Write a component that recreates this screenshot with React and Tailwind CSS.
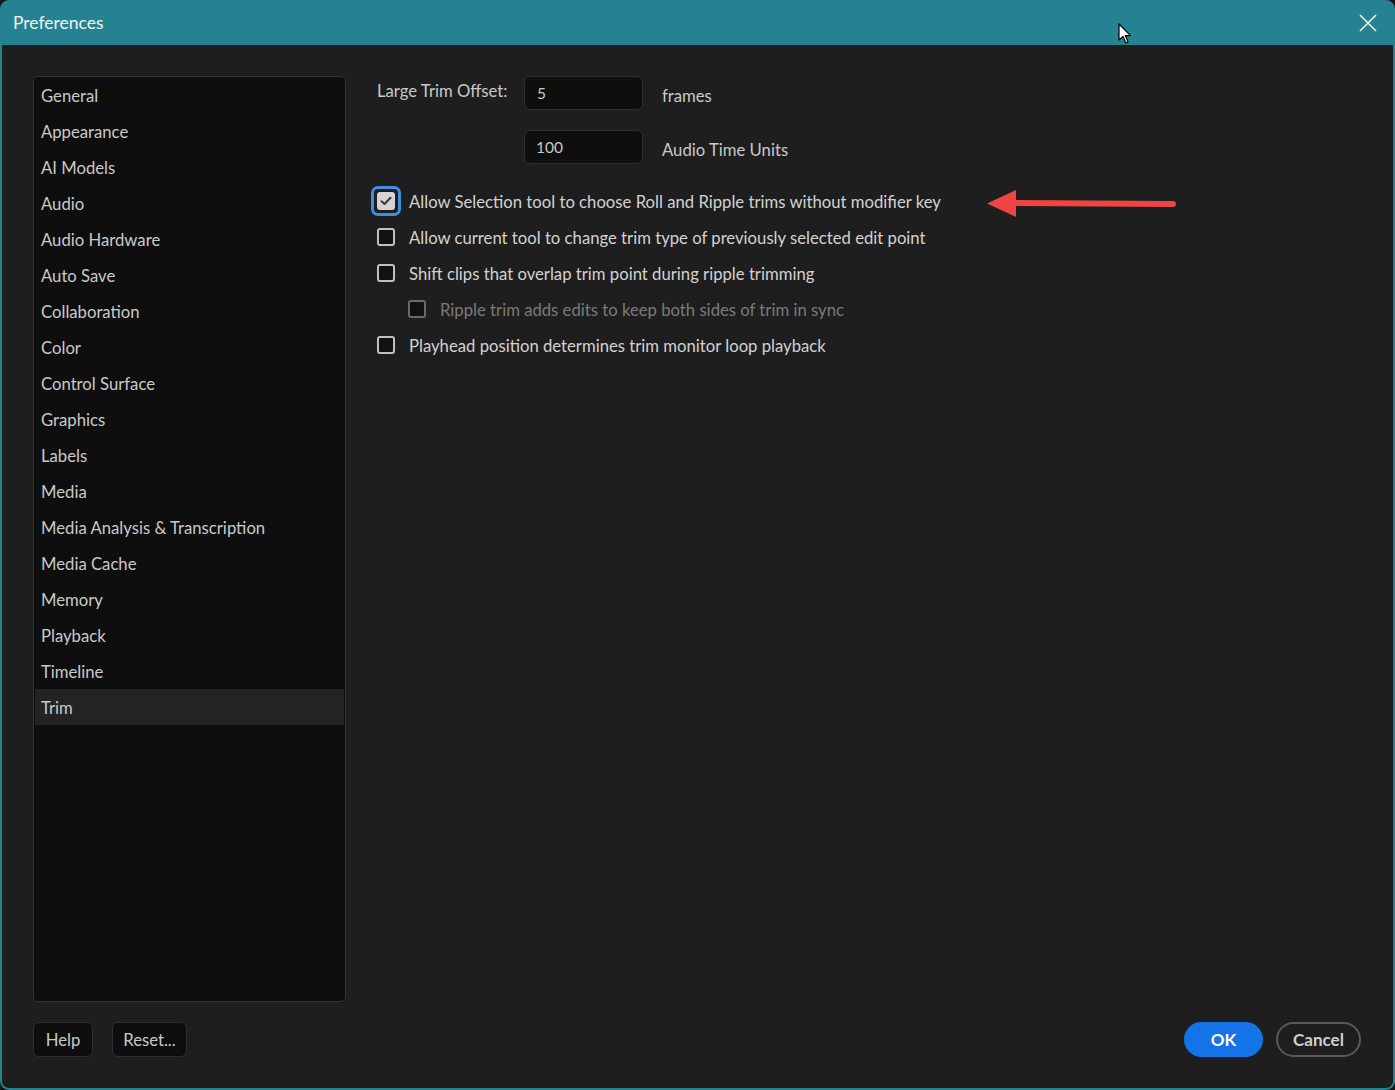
import React from "react";

const items = [
  "General","Appearance","AI Models","Audio","Audio Hardware","Auto Save","Collaboration","Color","Control Surface","Graphics","Labels","Media","Media Analysis & Transcription","Media Cache","Memory","Playback","Timeline","Trim",
];

function Box({ checked, dim }) {
  if (checked) {
    return (
      <div className="w-[30px] h-[30px] -ml-[6px] mr-[-6px] rounded-[7px] border-[3px] border-[#3d8fe6] flex items-center justify-center shrink-0">
        <div className="w-[18px] h-[18px] rounded-[3px] bg-[#d4d4d4] flex items-center justify-center">
          <svg width="12" height="10" viewBox="0 0 12 10"><path d="M1.5 5.2 L4.5 8 L10.5 1.8" stroke="#3a3a3a" strokeWidth="2" fill="none" strokeLinecap="round" strokeLinejoin="round"/></svg>
        </div>
      </div>
    );
  }
  return (
    <div className={"w-[18px] h-[18px] rounded-[3px] border-2 bg-[#111111] shrink-0 " + (dim ? "border-[#6a6a6a]" : "border-[#c0c0c0]")} />
  );
}

function Row({ checked, dim, indent, children }) {
  return (
    <div className={"h-[36px] flex items-center " + (indent ? "pl-[31px]" : "")}>
      <Box checked={checked} dim={dim} />
      <span className={"ml-[14px] pt-[3px] text-[16.7px] " + (dim ? "text-[#7a7a7a]" : "text-[#d2d2d2]")}>{children}</span>
    </div>
  );
}

export default function App() {
  return (
    <div className="w-[1395px] h-[1090px] bg-[#161616] relative" style={{ fontFamily: "Lato, 'Noto Sans', sans-serif" }}>
      <div className="w-full h-full rounded-[9px] overflow-hidden bg-[#258391] flex flex-col">
        <div className="h-[45px] shrink-0 flex items-center justify-between pl-[13px] pr-[18px]">
          <span className="text-[17.5px] pt-[2px] text-[#f2f2f2]">Preferences</span>
          <svg width="18" height="18" viewBox="0 0 18 18"><path d="M1 1 L17 17 M17 1 L1 17" stroke="#f2f2f2" strokeWidth="1.6"/></svg>
        </div>
        <div className="flex-1 mx-[2px] mb-[2px] bg-[#1e1e1e] rounded-b-[7px] flex flex-col pt-[31px] pl-[31px] pr-[32px]">
          <div className="flex h-[926px]">
            <div className="w-[313px] h-full bg-[#0e0e0e] border border-[#323232] rounded-[5px] px-[1px] shrink-0">
              {items.map((t) => (
                <div key={t} className={"h-[36px] flex items-center pl-[6px] pt-[4px] text-[16.7px] text-[#c9c9c9] " + (t === "Trim" ? "bg-[#232323]" : "")}>{t}</div>
              ))}
            </div>
            <div className="flex-1 pl-[31px] relative">
              <div className="flex items-center h-[34px]">
                <span className="w-[147px] text-[16.7px] text-[#c9c9c9] -mt-[3px]">Large Trim Offset:</span>
                <div className="w-[119px] h-[34px] bg-[#0e0e0e] border border-[#2e2e2e] rounded-[6px] flex items-center pl-[12px] pt-[2px] text-[15.5px] text-[#c9c9c9]">5</div>
                <span className="ml-[19px] text-[16.7px] text-[#c9c9c9] mt-[7px]">frames</span>
              </div>
              <div className="flex items-center h-[34px] mt-[20px]">
                <span className="w-[147px]" />
                <div className="w-[119px] h-[34px] bg-[#0e0e0e] border border-[#2e2e2e] rounded-[6px] flex items-center pl-[11px] pt-[2px] text-[15.5px] text-[#c9c9c9]">100</div>
                <span className="ml-[19px] text-[16.7px] text-[#c9c9c9] mt-[7px]">Audio Time Units</span>
              </div>
              <div className="mt-[19px]">
                <Row checked>Allow Selection tool to choose Roll and Ripple trims without modifier key</Row>
                <Row>Allow current tool to change trim type of previously selected edit point</Row>
                <Row>Shift clips that overlap trim point during ripple trimming</Row>
                <Row indent dim>Ripple trim adds edits to keep both sides of trim in sync</Row>
                <Row>Playhead position determines trim monitor loop playback</Row>
              </div>
              <svg className="absolute left-[639px] top-[111px]" width="194" height="34" viewBox="0 0 194 34">
                <path d="M188 17 L30 16" stroke="#f04444" strokeWidth="6" strokeLinecap="round"/>
                <path d="M2 16.5 L31 3 L31 30 Z" fill="#f04444"/>
              </svg>
            </div>
          </div>
          <div className="flex items-center mt-[20px] h-[35px]">
            <div className="w-[60px] h-[35px] rounded-[6px] bg-[#0e0e0e] border border-[#2e2e2e] flex items-center justify-center pt-[2px] text-[16.7px] text-[#c9c9c9]">Help</div>
            <div className="ml-[19px] w-[75px] h-[35px] rounded-[6px] bg-[#0e0e0e] border border-[#2e2e2e] flex items-center justify-center pt-[2px] text-[16.7px] text-[#c9c9c9]">Reset...</div>
            <div className="flex-1" />
            <div className="w-[79px] h-[35px] rounded-full bg-[#1473e6] flex items-center justify-center text-[17px] font-bold text-white">OK</div>
            <div className="ml-[13px] w-[85px] h-[35px] rounded-full border-2 border-[#595959] flex items-center justify-center text-[17px] font-bold text-[#cfcfcf]">Cancel</div>
          </div>
        </div>
      </div>
      <svg className="absolute left-[1118px] top-[23px]" width="14" height="22" viewBox="0 0 14 22">
        <path d="M1 1 L1 17 L5 13.5 L7.8 20 L10 19 L7.3 12.6 L12.5 12.6 Z" fill="#ffffff" stroke="#000000" strokeWidth="1.2" strokeLinejoin="round"/>
      </svg>
    </div>
  );
}
